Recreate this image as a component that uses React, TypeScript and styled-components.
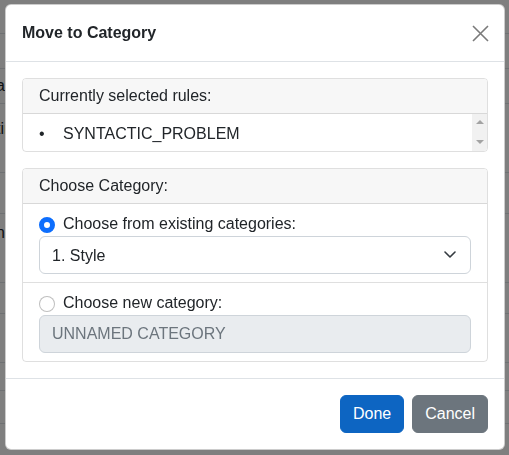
import React from "react";
import styled, { createGlobalStyle } from "styled-components";

const GlobalStyle = createGlobalStyle`
  html, body {
    margin: 0;
    padding: 0;
    background: #ffffff;
    font-family: "Liberation Sans", Arial, Helvetica, sans-serif;
    font-size: 16px;
    color: #212529;
  }
  * { box-sizing: border-box; }
`;

/* ---------- page behind the dialog ---------- */

const PageTable = styled.table`
  border-collapse: collapse;
  width: calc(100% + 4px);
  margin-left: -4px;
`;

const PageRow = styled.tr<{ $h: number }>`
  height: ${(p) => p.$h}px;
  border-bottom: 1px solid #dee2e6;
`;

const PageCell = styled.td<{ $pt: number }>`
  padding: ${(p) => p.$pt}px 0 0 0;
  vertical-align: ${(p) => (p.$pt > 0 ? "top" : "middle")};
  font-size: 16px;
  line-height: 20px;
  white-space: nowrap;
`;

const Backdrop = styled.div`
  position: fixed;
  inset: 0;
  background: rgba(0, 0, 0, 0.5);
`;

/* ---------- dialog ---------- */

const Dialog = styled.div`
  position: fixed;
  top: 4px;
  left: 5px;
  width: 500px;
  background: #ffffff;
  border: 1px solid rgba(0, 0, 0, 0.2);
  border-radius: 6px;
  display: flex;
  flex-direction: column;
`;

const Header = styled.div`
  display: flex;
  align-items: center;
  justify-content: space-between;
  padding: 16px;
  border-bottom: 1px solid #dee2e6;
`;

const Title = styled.h5`
  margin: 0;
  font-size: 16px;
  font-weight: 700;
  line-height: 24px;
  color: #212529;
`;

const CloseButton = styled.button`
  display: flex;
  align-items: center;
  justify-content: center;
  width: 18px;
  height: 18px;
  margin-right: -1px;
  padding: 0;
  border: 0;
  background: transparent;
  cursor: pointer;
`;

const Body = styled.div`
  display: flex;
  flex-direction: column;
  gap: 16px;
  padding: 16px;
`;

const Card = styled.div`
  border: 1px solid rgba(0, 0, 0, 0.125);
  border-radius: 4px;
  overflow: hidden;
`;

const CardHeader = styled.div`
  padding: 5px 16px;
  line-height: 24px;
  background: #f7f7f7;
  border-bottom: 1px solid rgba(0, 0, 0, 0.125);
`;

const RulesBox = styled.div`
  display: flex;
  height: 37px;
`;

const RulesList = styled.ul`
  flex: 1;
  margin: 0;
  padding: 8px 16px 0 16px;
  list-style: none;
  line-height: 24px;
`;

const RuleItem = styled.li`
  display: flex;
`;

const Bullet = styled.span`
  width: 24px;
  flex: none;
`;

const ScrollTrack = styled.div`
  width: 15px;
  flex: none;
  background: #f1f1f1;
  display: flex;
  flex-direction: column;
  align-items: center;
  justify-content: space-between;
  padding: 6px 0 7px;
`;

const Arrow = styled.span<{ $dir: "up" | "down" }>`
  width: 0;
  height: 0;
  border-left: 4px solid transparent;
  border-right: 4px solid transparent;
  ${(p) =>
    p.$dir === "up"
      ? "border-bottom: 4px solid #a3a3a3;"
      : "border-top: 4px solid #a3a3a3;"}
`;

const Section = styled.div`
  display: flex;
  flex-direction: column;
  padding: 8px 16px;
  & + & {
    border-top: 1px solid rgba(0, 0, 0, 0.125);
  }
`;

const CheckRow = styled.label`
  display: flex;
  align-items: center;
  gap: 8px;
  line-height: 24px;
`;

const Radio = styled.input.attrs({ type: "radio" })`
  appearance: none;
  -webkit-appearance: none;
  width: 16px;
  height: 16px;
  margin: 0;
  margin-top: 2px;
  border-radius: 50%;
  border: 1px solid rgba(0, 0, 0, 0.25);
  background: #ffffff;
  flex: none;
  &:checked {
    border: 5px solid #0d6efd;
    background: #ffffff;
  }
`;

const SelectWrap = styled.div`
  position: relative;
`;

const Select = styled.select`
  appearance: none;
  -webkit-appearance: none;
  display: block;
  width: 100%;
  height: 38px;
  padding: 0 36px 0 12px;
  font-family: inherit;
  font-size: 16px;
  color: #212529;
  background: #ffffff;
  border: 1px solid #ced4da;
  border-radius: 6px;
`;

const Chevron = styled.svg`
  position: absolute;
  right: 15px;
  top: 50%;
  margin-top: -4px;
  pointer-events: none;
`;

const TextInput = styled.input`
  display: block;
  width: 100%;
  height: 38px;
  padding: 0 12px;
  font-family: inherit;
  font-size: 16px;
  color: #6c757d;
  background: #e9ecef;
  border: 1px solid #ced4da;
  border-radius: 6px;
  &::placeholder {
    color: #6c757d;
    opacity: 1;
  }
`;

const Footer = styled.div`
  display: flex;
  justify-content: flex-end;
  gap: 8px;
  padding: 16px;
  border-top: 1px solid #dee2e6;
`;

const Button = styled.button<{ $variant: "primary" | "secondary" }>`
  height: 38px;
  padding: 0 12px;
  font-family: inherit;
  font-size: 16px;
  color: #ffffff;
  border-radius: 6px;
  cursor: pointer;
  background: ${(p) => (p.$variant === "primary" ? "#0d65c2" : "#6c757d")};
  border: 1px solid ${(p) => (p.$variant === "primary" ? "#0d65c2" : "#6c757d")};
`;

const pageRows: { h: number; text: string; pt: number }[] = [
  { h: 33, text: "", pt: 0 },
  { h: 35, text: "", pt: 0 },
  { h: 35, text: "ail", pt: 0 },
  { h: 69, text: "tin", pt: 15 },
  { h: 41, text: "", pt: 0 },
  { h: 69, text: "nal", pt: 9 },
  { h: 31, text: "", pt: 0 },
  { h: 49, text: "", pt: 0 },
  { h: 28, text: "", pt: 0 },
  { h: 33, text: "", pt: 0 },
  { h: 32, text: "", pt: 0 },
];

export default function App() {
  return (
    <>
      <GlobalStyle />
      <PageTable>
        <tbody>
          {pageRows.map((r, i) => (
            <PageRow key={i} $h={r.h}>
              <PageCell $pt={r.pt}>{r.text}</PageCell>
            </PageRow>
          ))}
        </tbody>
      </PageTable>
      <Backdrop />
      <Dialog role="dialog">
        <Header>
          <Title>Move to Category</Title>
          <CloseButton aria-label="Close">
            <svg width="17" height="17" viewBox="0 0 17 17">
              <path d="M1 1 L16 16 M16 1 L1 16" stroke="#7a7a7a" strokeWidth="1.6" fill="none" />
            </svg>
          </CloseButton>
        </Header>
        <Body>
          <Card>
            <CardHeader>Currently selected rules:</CardHeader>
            <RulesBox>
              <RulesList>
                <RuleItem>
                  <Bullet>•</Bullet>
                  SYNTACTIC_PROBLEM
                </RuleItem>
              </RulesList>
              <ScrollTrack>
                <Arrow $dir="up" />
                <Arrow $dir="down" />
              </ScrollTrack>
            </RulesBox>
          </Card>
          <Card>
            <CardHeader>Choose Category:</CardHeader>
            <Section>
              <CheckRow>
                <Radio name="cat" defaultChecked />
                Choose from existing categories:
              </CheckRow>
              <SelectWrap>
                <Select defaultValue="1">
                  <option value="1">1. Style</option>
                </Select>
                <Chevron width="12" height="7" viewBox="0 0 12 7">
                  <path d="M1 1 L6 6 L11 1" stroke="#343a40" strokeWidth="1.6" fill="none" strokeLinecap="round" strokeLinejoin="round" />
                </Chevron>
              </SelectWrap>
            </Section>
            <Section>
              <CheckRow>
                <Radio name="cat" />
                Choose new category:
              </CheckRow>
              <TextInput disabled placeholder="UNNAMED CATEGORY" />
            </Section>
          </Card>
        </Body>
        <Footer>
          <Button $variant="primary">Done</Button>
          <Button $variant="secondary">Cancel</Button>
        </Footer>
      </Dialog>
    </>
  );
}
